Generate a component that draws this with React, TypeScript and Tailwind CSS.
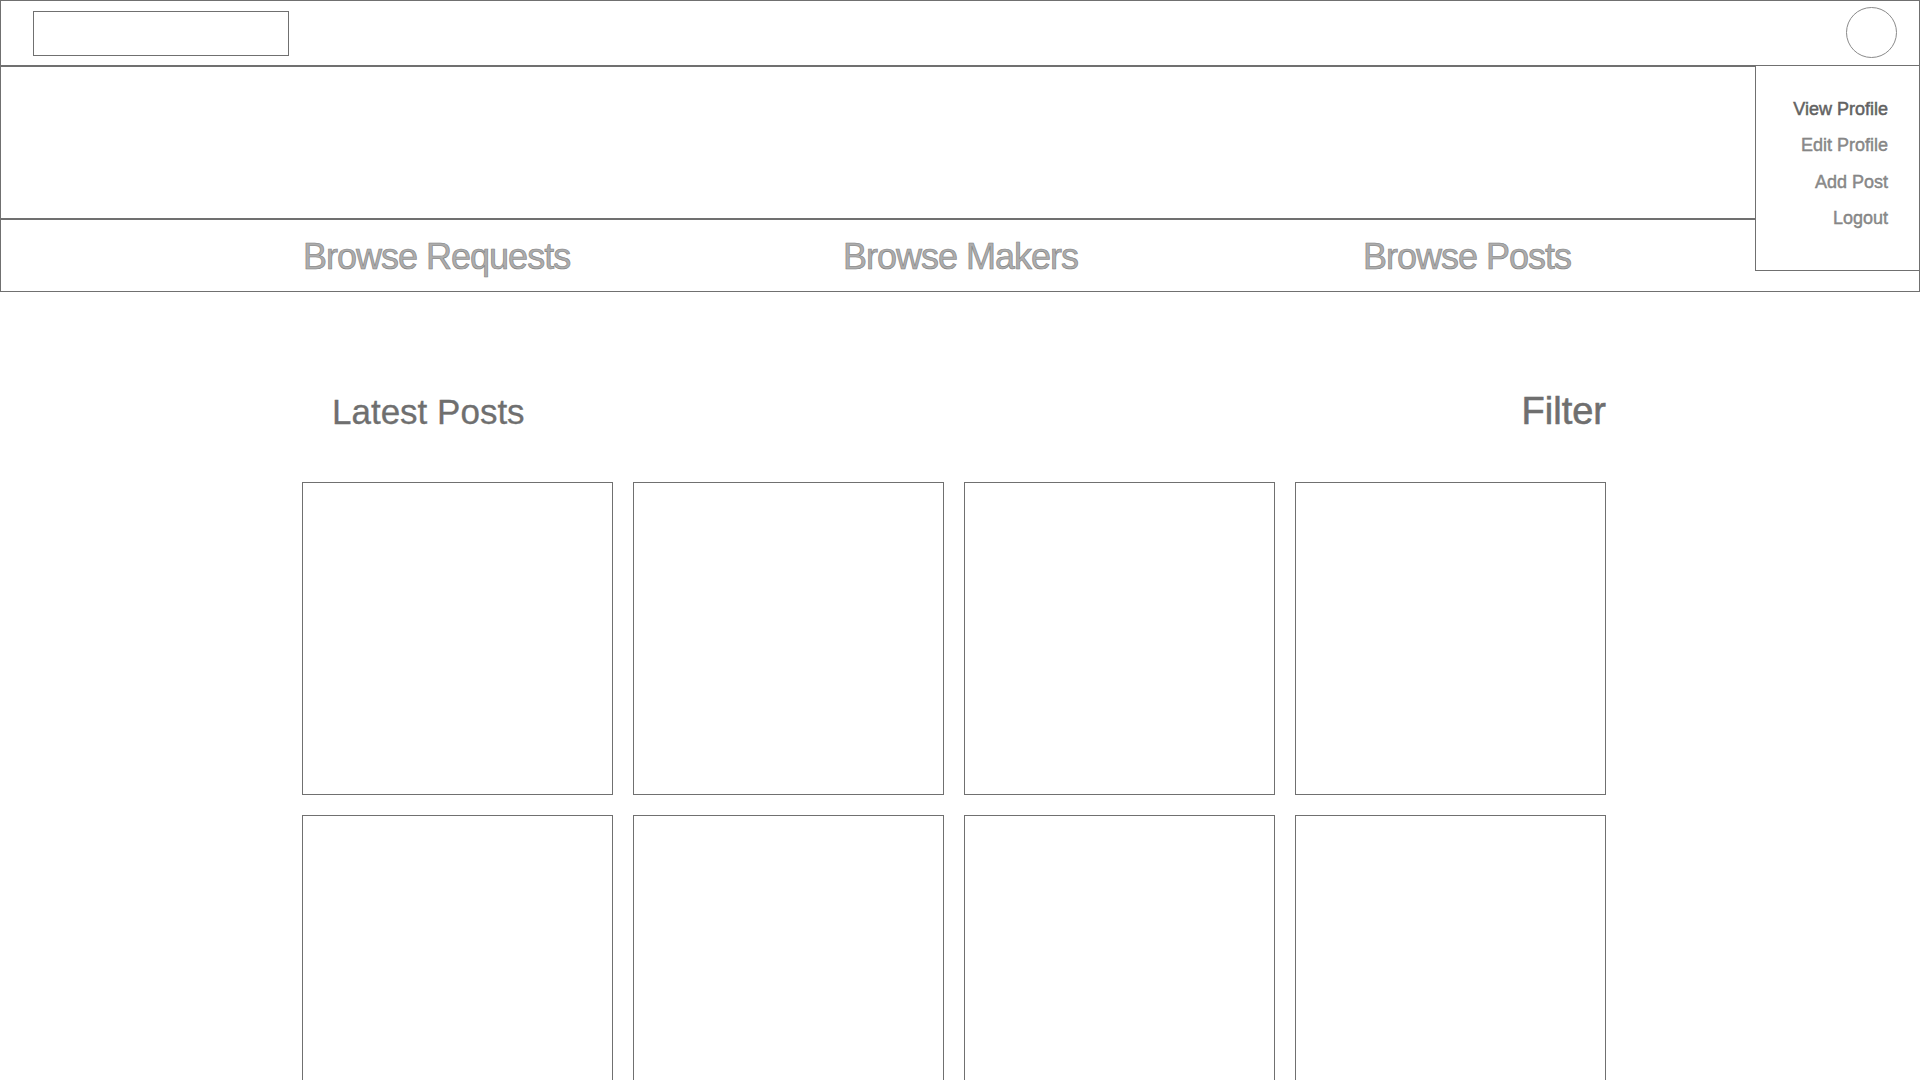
import React from "react";

const menuItems = ["View Profile", "Edit Profile", "Add Post", "Logout"];

export default function App() {
  return (
    <div className="relative h-[1080px] w-[1920px] overflow-hidden bg-white font-['Liberation_Sans',Arial,sans-serif]">
      {/* Top bar */}
      <div className="flex h-[67px] items-start justify-between border-x border-t border-b-2 border-[#707070]">
        <div className="ml-[32px] mt-[10px] h-[45px] w-[256px] border border-[#707070]" />
        <div className="mr-[22px] mt-[6px] h-[51px] w-[51px] rounded-full border border-[#8a8a8a]" />
      </div>

      {/* Hero */}
      <div className="h-[153px] border-x border-b-2 border-[#707070]" />

      {/* Nav */}
      <div className="flex h-[72px] items-center border-x border-b border-[#707070] pl-[302px] pt-[3px]">
        <div className="w-[540px] text-[36px] leading-none tracking-[-1px] text-[#adadad] [-webkit-text-stroke:0.6px_#808080]">
          Browse Requests
        </div>
        <div className="w-[520px] text-[36px] leading-none tracking-[-1px] text-[#adadad] [-webkit-text-stroke:0.6px_#808080]">
          Browse Makers
        </div>
        <div className="text-[36px] leading-none tracking-[-1px] text-[#adadad] [-webkit-text-stroke:0.6px_#808080]">
          Browse Posts
        </div>
      </div>

      {/* Dropdown menu */}
      <div className="absolute right-0 top-[66px] flex h-[205px] w-[165px] flex-col items-end border-x border-b border-[#707070] bg-white pr-[31px] pt-[25px]">
        {menuItems.map((item, i) => (
          <div
            key={item}
            className={
              i === 0
                ? "text-[18px] leading-[36.3px] text-[#626262] [-webkit-text-stroke:0.5px_#626262]"
                : "text-[18px] leading-[36.3px] text-[#8c8c8c] [-webkit-text-stroke:0.4px_#7a7a7a]"
            }
          >
            {item}
          </div>
        ))}
      </div>

      {/* Main content */}
      <div className="ml-[302px] w-[1304px]">
        <div className="mt-[100px] flex items-baseline justify-between">
          <div className="pl-[30px] text-[35px] leading-none text-[#6f6f6f] [-webkit-text-stroke:0.3px_#6f6f6f]">
            Latest Posts
          </div>
          <div className="text-[38px] leading-none text-[#6f6f6f] [-webkit-text-stroke:0.6px_#6f6f6f]">Filter</div>
        </div>
        <div className="mt-[52px] grid grid-cols-[repeat(4,311px)] gap-x-[20px] gap-y-[20px]">
          {Array.from({ length: 8 }).map((_, i) => (
            <div key={i} className="h-[313px] w-[311px] border border-[#707070]" />
          ))}
        </div>
      </div>
    </div>
  );
}
